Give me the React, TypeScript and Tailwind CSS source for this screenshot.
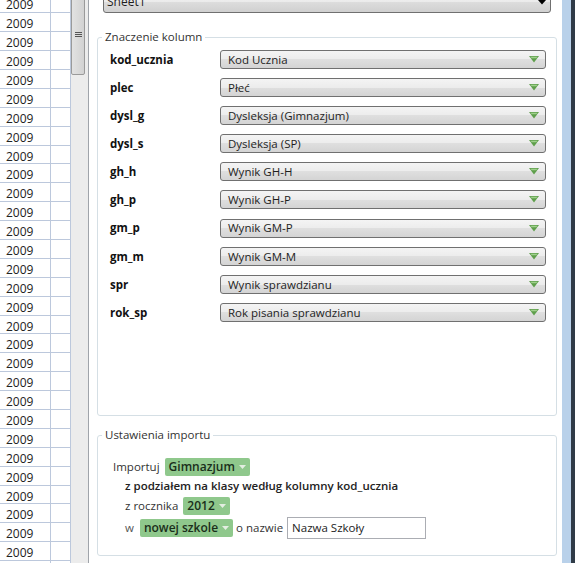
import React from 'react'

const COLUMNS: { name: string; value: string }[] = [
  { name: 'kod_ucznia', value: 'Kod Ucznia' },
  { name: 'plec', value: 'Płeć' },
  { name: 'dysl_g', value: 'Dysleksja (Gimnazjum)' },
  { name: 'dysl_s', value: 'Dysleksja (SP)' },
  { name: 'gh_h', value: 'Wynik GH-H' },
  { name: 'gh_p', value: 'Wynik GH-P' },
  { name: 'gm_p', value: 'Wynik GM-P' },
  { name: 'gm_m', value: 'Wynik GM-M' },
  { name: 'spr', value: 'Wynik sprawdzianu' },
  { name: 'rok_sp', value: 'Rok pisania sprawdzianu' },
]

const ROWS = Array.from({ length: 31 }, (_, i) => i)

export default function App() {
  return (
    <div className="flex h-[563px] w-[575px] overflow-hidden bg-white font-['Open_Sans',sans-serif] text-[11.5px] text-[#1e1e1e]">
      <Sheet />
      <Scrollbar />
      <Panel />
      <div className="w-[9px] shrink-0 bg-[#b9d1ea]" />
      <div className="w-[4px] shrink-0 bg-[#2f3b48]" />
    </div>
  )
}

function Sheet() {
  return (
    <div className="-mt-[5.6px] flex w-[71px] shrink-0 flex-col text-[12px]">
      {ROWS.map((i) => (
        <div key={i} className="flex h-[18.9px] shrink-0 border-b border-[#bcc8dc]">
          <div className="w-[51px] border-r border-[#bcc8dc] pl-[6px] pt-[2px] leading-[17px] text-[#222]">2009</div>
          <div className="w-[20px] border-r border-[#bcc8dc]" />
        </div>
      ))}
    </div>
  )
}

function Scrollbar() {
  return (
    <div className="flex w-[17px] shrink-0 bg-[#ececec]">
      <div className="relative -mt-[20px] h-[95px] w-[14px] rounded-b-[2px] border border-[#9a9a9a] bg-[linear-gradient(90deg,#e2e2e2,#d2d2d2)]">
        <div className="absolute left-[3px] top-[51px] flex w-[7px] flex-col gap-[1px]">
          <div className="h-[1px] bg-[#555]" />
          <div className="h-[1px] bg-[#555]" />
          <div className="h-[1px] bg-[#555]" />
        </div>
      </div>
    </div>
  )
}

function Panel() {
  return (
    <div className="flex flex-1 flex-col border-l border-[#a0a4aa] pl-[8px] pr-[5px]">
      <div className="relative -mt-[9px] ml-[6px] mr-[6px] flex h-[22px] shrink-0 items-center rounded-[3px] border border-[#707070] bg-[linear-gradient(#f3f3f3,#ebebeb_50%,#dddddd_50%,#d0d0d0)] pl-[3px] text-[12px]">
        <span>Sheet1</span>
        <svg className="absolute right-[4px] top-[8px]" width="8" height="5" viewBox="0 0 8 5">
          <polygon points="0,0 8,0 4,4.5" fill="#000" />
        </svg>
      </div>

      <fieldset className="mt-[16px] h-[387px] shrink-0 rounded-[3px] border border-[#d5dfe5]">
        <legend className="ml-[4px] px-[3px] leading-[16px] text-[#333]">Znaczenie kolumn</legend>
        <div className="flex flex-col gap-[9.1px] pl-[12px] pr-[10px] pt-[5px]">
          {COLUMNS.map((c) => (
            <div key={c.name} className="flex h-[19px] items-center">
              <span className="w-[110px] shrink-0 font-bold text-[#111]">{c.name}</span>
              <Dropdown value={c.value} />
            </div>
          ))}
        </div>
      </fieldset>

      <fieldset className="mt-[11px] h-[129px] shrink-0 rounded-[3px] border border-[#d5dfe5]">
        <legend className="ml-[4px] px-[3px] leading-[16px] text-[#333]">Ustawienia importu</legend>
        <div className="flex flex-col pl-[15px] pt-[14px] text-[#333]">
          <div className="flex h-[19px] items-center gap-[5px]">
            <span>Importuj</span>
            <Chip label="Gimnazjum" />
          </div>
          <div className="ml-[12px] flex h-[20px] items-center font-semibold text-[#222]">
            z podziałem na klasy według kolumny kod_ucznia
          </div>
          <div className="ml-[12px] flex h-[20px] items-center gap-[5px]">
            <span>z rocznika</span>
            <Chip label="2012" />
          </div>
          <div className="ml-[12px] mt-[1px] flex h-[22px] items-center">
            <span className="mr-[6px] text-[#555]">w</span>
            <Chip label="nowej szkole" />
            <span className="ml-[3px] mr-[4px]">o nazwie</span>
            <div className="flex h-[22px] w-[139px] items-center border border-[#abadb3] bg-white pl-[4px] text-[#222]">
              Nazwa Szkoły
            </div>
          </div>
        </div>
      </fieldset>
    </div>
  )
}

function Dropdown({ value }: { value: string }) {
  return (
    <div className="flex h-[19px] flex-1 items-center justify-between rounded-[3px] border border-[#707070] bg-[linear-gradient(#f4f4f4,#ececec_50%,#dfdfdf_50%,#d4d4d4)] pl-[7px] pr-[6px] text-[#1e1e1e]">
      <span>{value}</span>
      <svg width="10" height="7" viewBox="0 0 10 7">
        <polygon points="0,0 10,0 5,6.5" fill="#5f9f4c" />
        <polygon points="1.5,0.8 8.5,0.8 7.4,2.3 2.6,2.3" fill="#9fd08c" />
      </svg>
    </div>
  )
}

function Chip({ label }: { label: string }) {
  return (
    <div className="flex h-[18px] items-center gap-[4px] rounded-[2px] bg-[#8fc88c] px-[4px] text-[12px] font-semibold text-[#1a2e1a]">
      <span>{label}</span>
      <svg width="7" height="4" viewBox="0 0 7 4">
        <polygon points="0,0 7,0 3.5,4" fill="#e4eee2" />
      </svg>
    </div>
  )
}
